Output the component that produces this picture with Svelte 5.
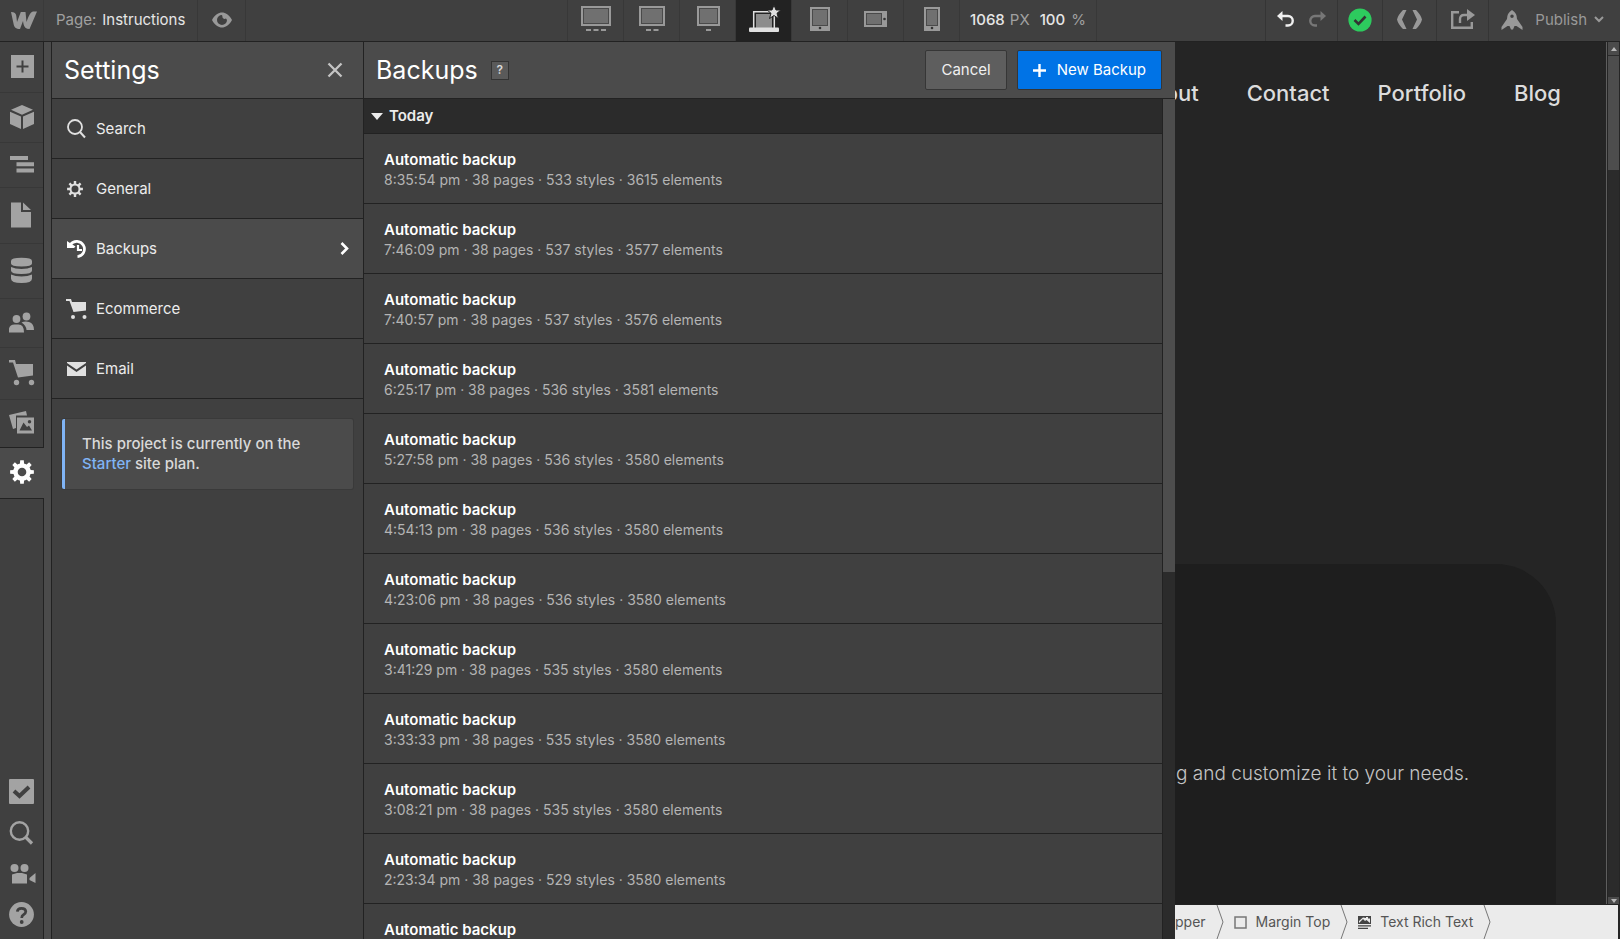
<script>
  const rail = [
    { id: 'add', label: 'Add elements', h: 23 },
    { id: 'cube', label: 'Symbols', h: 22 },
    { id: 'nav', label: 'Navigator', h: 17 },
    { id: 'page', label: 'Pages', h: 28 },
    { id: 'db', label: 'CMS', h: 27 },
    { id: 'users', label: 'Users', h: 21 },
    { id: 'cart', label: 'Ecommerce', h: 24 },
    { id: 'assets', label: 'Assets', h: 20 }
  ];

  const menu = [
    { id: 'search', label: 'Search' },
    { id: 'general', label: 'General' },
    { id: 'backups', label: 'Backups' },
    { id: 'ecommerce', label: 'Ecommerce' },
    { id: 'email', label: 'Email' }
  ];
  let active = $state('backups');
  let open = $state(true);

  const backups = [
    ['8:35:54 pm', 533, 3615],
    ['7:46:09 pm', 537, 3577],
    ['7:40:57 pm', 537, 3576],
    ['6:25:17 pm', 536, 3581],
    ['5:27:58 pm', 536, 3580],
    ['4:54:13 pm', 536, 3580],
    ['4:23:06 pm', 536, 3580],
    ['3:41:29 pm', 535, 3580],
    ['3:33:33 pm', 535, 3580],
    ['3:08:21 pm', 535, 3580],
    ['2:23:34 pm', 529, 3580],
    ['', 0, 0]
  ];

  const gear = (cx, cy, ri, ro, n) => {
    let d = '';
    for (let i = 0; i < n; i++) {
      const a = (i * 2 * Math.PI) / n - Math.PI / 2;
      const pts = [[ri, -0.25], [ro, -0.15], [ro, 0.15], [ri, 0.25]];
      for (const [r, o] of pts) {
        d += (d ? 'L' : 'M') + (cx + r * Math.cos(a + o)).toFixed(2) + ' ' + (cy + r * Math.sin(a + o)).toFixed(2);
      }
    }
    return d + 'Z';
  };
</script>

<div class="app">
  <header class="topbar">
    <button class="logo" aria-label="Menu">
      <svg width="26" height="18" viewBox="0 0 26 18"><path fill="currentColor" d="M0 1C3.500 1 5 2.500 5.300 5L6 11L9.800 1H14.500L15.500 11C17 7 19 1 22 .5H26L18.500 18C15 18 13 16 12.500 13L12 10L9 18C5 18 3 16 2.600 13Z" /></svg>
    </button>
    <div class="bar">
      <div class="left">
        <button class="pagename"><span class="dim">Page:</span> Instructions</button>
        <button class="eye" aria-label="Preview">
          <svg width="20" height="16" viewBox="0 0 20 16"><path fill="currentColor" fill-rule="evenodd" d="M0 8C3 2.500 6.500 .5 10 .5S17 2.500 20 8C17 13.500 13.500 15.500 10 15.500S3 13.500 0 8ZM10 3A5 5 0 1 0 15 8L14 6.500A2.500 2.500 0 0 1 10.500 5.500Q10.500 4 10 3Z" /></svg>
        </button>
      </div>
      <nav class="devices" aria-label="Breakpoints">
        <button aria-label="1920px">
          <svg width="30" height="26" viewBox="0 0 30 26"><rect x="1" y="1" width="28" height="18" fill="#4a4a4a" stroke="#999" stroke-width="2" /><rect x="3" y="3" width="24" height="14" fill="#707070" /><path fill="#999" d="M5 23h5v2H5zM12.500 23h5v2h-5zM20 23h5v2h-5z" /></svg>
        </button>
        <button aria-label="1440px">
          <svg width="26" height="26" viewBox="0 0 26 26"><rect x="1" y="1" width="24" height="18" fill="#4a4a4a" stroke="#999" stroke-width="2" /><rect x="3" y="3" width="20" height="14" fill="#707070" /><path fill="#999" d="M7 23h5v2H7zM14.500 23h5v2h-5z" /></svg>
        </button>
        <button aria-label="1280px">
          <svg width="24" height="26" viewBox="0 0 24 26"><rect x="2" y="1" width="21" height="18" fill="#4a4a4a" stroke="#999" stroke-width="2" /><rect x="4" y="3" width="17" height="14" fill="#707070" /><path fill="#999" d="M10 23h5v2h-5z" /></svg>
        </button>
        <button class="on" aria-label="Base">
          <svg width="30" height="28" viewBox="0 0 30 28"><path fill="#222" stroke="#e0e0e0" stroke-width="1.500" d="M4.700 23V6.700H25.300V23" /><rect x="7" y="9" width="16" height="14" fill="#8c8c8c" /><rect x="0" y="22.500" width="30" height="4.500" rx="1" fill="#e0e0e0" /><path fill="#e0e0e0" stroke="#222" stroke-width="1" d="M25 0L27 5H31.800L28 8.300L29.500 13.500L25 10.500L20.500 13.500L22 8.300L18.200 5H23Z" /></svg>
        </button>
        <button aria-label="Tablet">
          <svg width="20" height="24" viewBox="0 0 20 24"><rect width="20" height="24" fill="#999" /><rect x="2" y="2" width="16" height="17" fill="#4a4a4a" /><rect x="3" y="3" width="14" height="15" fill="#707070" /><circle cx="10" cy="21" r="1.300" fill="#333" /></svg>
        </button>
        <button aria-label="Mobile landscape">
          <svg width="23" height="24" viewBox="0 0 23 24"><rect y="4" width="23" height="16" fill="#999" /><rect x="2" y="6" width="16" height="12" fill="#4a4a4a" /><rect x="3" y="7" width="14" height="10" fill="#707070" /><circle cx="20.500" cy="12" r="1.300" fill="#333" /></svg>
        </button>
        <button aria-label="Mobile portrait">
          <svg width="16" height="24" viewBox="0 0 16 24"><rect width="16" height="24" fill="#999" /><rect x="2" y="2" width="12" height="17" fill="#4a4a4a" /><rect x="3" y="3" width="10" height="15" fill="#707070" /><circle cx="8" cy="21" r="1.300" fill="#333" /></svg>
        </button>
        <button class="size">1068 <span class="dim">PX</span><span class="zoom">100 <span class="dim">%</span></span></button>
      </nav>
      <div class="tools">
        <div class="undo">
          <button class="bright" aria-label="Undo">
            <svg width="17" height="17" viewBox="0 0 17 17"><path fill="none" stroke="currentColor" stroke-width="2.400" d="M4 5H11A4.500 4.500 0 0 1 11 14.500H8.500" /><path fill="currentColor" d="M0 5L5.500 0V10Z" /></svg>
          </button>
          <button class="faint" aria-label="Redo">
            <svg width="17" height="17" viewBox="0 0 17 17"><path fill="none" stroke="currentColor" stroke-width="2.400" d="M13 5H6A4.500 4.500 0 0 0 6 14.500H8" /><path fill="currentColor" d="M17 5L11.500 0V10Z" /></svg>
          </button>
        </div>
        <button class="t45" aria-label="Saved">
          <svg width="24" height="24" viewBox="0 0 24 24"><circle cx="12" cy="12" r="11.600" fill="#2dcb5e" /><path fill="none" stroke="#333" stroke-width="2.600" d="M6.500 12L10.500 16L17.500 8.500" /></svg>
        </button>
        <button class="t54" aria-label="Code export">
          <svg width="25" height="19" viewBox="0 0 25 19"><path fill="currentColor" d="M6 0H9.500L5 9.500L9.500 19H6Q1 14 0 9.500Q1 5 6 0ZM19 0H15.500L20 9.500L15.500 19H19Q24 14 25 9.500Q24 5 19 0Z" /></svg>
        </button>
        <button class="t52" aria-label="Share">
          <svg width="24" height="21" viewBox="0 0 24 21"><path fill="none" stroke="currentColor" stroke-width="2.400" d="M8 3.200H1.200V18.800H20.800V13M9 14V10Q9 6 13 6H17" /><path fill="currentColor" d="M16 0L24 6L16 12Z" /></svg>
        </button>
        <button class="publish">
          <svg width="22" height="20" viewBox="0 0 22 20"><path fill="currentColor" fill-rule="evenodd" d="M11 0Q16 3 16 9L21.500 17V20L15.500 16H13.500L12 19.500H10L8.500 16H6.500L.5 20V17L6 9Q6 3 11 0ZM11 4.500A1.700 1.700 0 1 0 11 8A1.700 1.700 0 0 0 11 4.500Z" /></svg>
          <span>Publish</span>
          <svg class="chev" width="10" height="7" viewBox="0 0 10 7"><path fill="none" stroke="currentColor" stroke-width="2" d="M1 1L5 5L9 1" /></svg>
        </button>
      </div>
    </div>
  </header>

  <div class="body">
    <aside class="rail">
      {#each rail as r}
        <button class="ritem" aria-label={r.label}>
          <svg width="28" height={r.h} viewBox="0 {(24 - r.h) / 2} 28 {r.h}" fill="currentColor">
            {#if r.id === 'add'}
              <path fill-rule="evenodd" d="M3 .5H26V23.500H3ZM13.500 6V11H8.500V13H13.500V18H15.500V13H20.500V11H15.500V6Z" />
            {:else if r.id === 'cube'}
              <path d="M14 0L25 4.800L14 9.800L3 4.800ZM2 6.800L13 11.500V24L2 19ZM26 6.800L15 11.500V24L26 19Z" />
            {:else if r.id === 'nav'}
              <path d="M2 3.500H20V7.500H2ZM8.500 9.700H26V13.700H8.500ZM8.500 16H26V20H8.500Z" />
            {:else if r.id === 'page'}
              <path d="M3-.5H13V9H23V24.500H3ZM15-.5L23 7H15Z" />
            {:else if r.id === 'db'}
              <path d="M3 2.500Q3-.8 13.500-.8T24 2.500V5Q24 8 13.500 8T3 5ZM3 8.500Q7 10.500 13.500 10.500T24 8.500V12Q24 15.500 13.500 15.500T3 12ZM3 16Q7 18 13.500 18T24 16V20Q24 24.500 13.500 24.500T3 20Z" />
            {:else if r.id === 'users'}
              <circle cx="8.500" cy="8.500" r="3.900" /><circle cx="18.500" cy="6" r="3.900" /><path d="M1 22V18Q2 14 6.500 14H10.500Q16 14 16 22ZM13.500 12Q17 10.500 21 11.500Q26 13 26 19.500H18.500Q18 14.500 13.500 12Z" />
            {:else if r.id === 'cart'}
              <path d="M1-1H7L8 3H25V14.500L10 16.500L5 1.500H1Z" /><circle cx="8.500" cy="21.500" r="2.700" /><circle cx="23.500" cy="21.500" r="2.700" />
            {:else if r.id === 'assets'}
              <path d="M1 4L18 0L19 4.500H8V17L5 18Z" /><path fill-rule="evenodd" d="M9 6.500H26V22.500H9ZM11.500 19.500H24L21 14.500L19 16L15.500 11.500ZM21.500 9A1.700 1.700 0 1 0 21.500 12.500A1.700 1.700 0 0 0 21.500 9Z" />
            {/if}
          </svg>
        </button>
      {/each}
      <button class="ritem on" aria-label="Settings">
        <svg width="28" height="22" viewBox="0 1 28 22"><path fill="currentColor" d={gear(14, 12, 8.5, 12, 8)} /><circle cx="14" cy="12" r="6.500" fill="none" stroke="currentColor" stroke-width="4.500" /><circle cx="14" cy="12" r="4.300" fill="#4b4b4b" /></svg>
      </button>
      <div class="railrest">
        <button aria-label="Audit"><svg width="27" height="25" viewBox="0 0 27 25"><rect width="25" height="25" x="1" rx="1" fill="currentColor" /><path d="M6 12L11.500 17L21 8" fill="none" stroke="#404040" stroke-width="4" /></svg></button>
        <button aria-label="Find"><svg width="27" height="25" viewBox="0 0 27 25"><circle cx="11.500" cy="11" r="8.700" fill="none" stroke="currentColor" stroke-width="2.400" /><path d="M17.500 17L24 23.500" stroke="currentColor" stroke-width="3.200" /></svg></button>
        <button aria-label="Video tutorials"><svg width="27" height="25" viewBox="0 0 27 25" fill="currentColor"><circle cx="6.500" cy="7" r="4" /><circle cx="16.500" cy="7" r="4" /><path d="M4 13.500L9 12H14L19 13.500V22.500H4ZM21.500 17L27.500 12V22L21.500 19Z" /></svg></button>
        <button aria-label="Help"><svg width="27" height="25" viewBox="0 0 27 25"><circle cx="13.500" cy="12.500" r="12.400" fill="currentColor" /><path d="M9.300 9.700Q9.500 6.300 13.500 6.300T17.800 9.500Q17.800 11.500 15.500 12.700Q13.700 13.700 13.700 16" fill="none" stroke="#404040" stroke-width="2.700" /><circle cx="13.700" cy="20" r="1.900" fill="#404040" /></svg></button>
      </div>
    </aside>

    <section class="settings">
      <div class="head">
        <h1>Settings</h1>
        <button class="close" aria-label="Close"><svg width="16" height="16" viewBox="0 0 16 16"><path d="M1.500 1.500L14.500 14.500M14.500 1.500L1.500 14.500" stroke="currentColor" stroke-width="2.300" /></svg></button>
      </div>
      {#each menu as m}
        <button class="mitem" class:on={active === m.id} onclick={() => (active = m.id)}>
          <svg width="20" height="20" viewBox="0 0 20 20">
            {#if m.id === 'search'}
              <circle cx="8" cy="8" r="7" fill="none" stroke="currentColor" stroke-width="1.800" /><path d="M13 13L18 18.500" stroke="currentColor" stroke-width="2" />
            {:else if m.id === 'general'}
              <path fill="currentColor" d={gear(8, 10, 5, 8, 8)} /><circle cx="8" cy="10" r="4.500" fill="#404040" stroke="currentColor" stroke-width="2" />
            {:else if m.id === 'backups'}
              <path d="M3.500 5.500A7.700 7.700 0 1 1 10.500 17.700" fill="none" stroke="currentColor" stroke-width="2.700" /><path fill="currentColor" d="M0 2L1.800 3.300L8.500 7.500L7 9H0Z" /><path d="M11 6V11H15" fill="none" stroke="currentColor" stroke-width="2.200" />
            {:else if m.id === 'ecommerce'}
              <path fill="currentColor" d="M-1 0H4L5 3H19V11.500L6.500 13L2.500 2H-1Z" /><circle cx="6" cy="18" r="2" fill="currentColor" /><circle cx="17.500" cy="18" r="2" fill="currentColor" />
            {:else}
              <path fill="currentColor" d="M0 3H19V4L9.500 10.500L0 4ZM0 6.500L9.500 13L19 6.500V17H0Z" />
            {/if}
          </svg>
          <span>{m.label}</span>
          {#if active === m.id}
            <svg class="arrow" width="9" height="13" viewBox="0 0 9 13"><path d="M1.500 1L7 6.500L1.500 12" fill="none" stroke="currentColor" stroke-width="2.600" /></svg>
          {/if}
        </button>
      {/each}
      <p class="callout">This project is currently on the <a href="#plan">Starter</a> site plan.</p>
    </section>

    <section class="backups">
      <div class="head">
        <h1>Backups</h1>
        <button class="q" aria-label="About backups">?</button>
        <div class="actions">
          <button class="btn">Cancel</button>
          <button class="btn primary"><svg width="13" height="13" viewBox="0 0 13 13"><path d="M6.500 0V13M0 6.500H13" stroke="currentColor" stroke-width="2.400" /></svg>New Backup</button>
        </div>
      </div>
      <div class="scroll">
        <div class="list">
          <button class="today" onclick={() => (open = !open)}>
            <svg width="12" height="7" viewBox="0 0 12 7"><path d="M0 0H12L6 7Z" fill="currentColor" /></svg>Today
          </button>
          {#if open}
            {#each backups as [time, styles, elements]}
              <article>
                <h2>Automatic backup</h2>
                {#if time}<p>{time} · 38 pages · {styles} styles · {elements} elements</p>{/if}
              </article>
            {/each}
          {/if}
        </div>
        <div class="track"><div class="thumb"></div></div>
      </div>
    </section>

    <main class="stage">
      <div class="view">
        <div class="site">
          <nav>
            <a href="#about">About</a><a href="#contact">Contact</a><a href="#portfolio">Portfolio</a><a href="#blog">Blog</a>
          </nav>
          <div class="card"><p>g and customize it to your needs.</p></div>
        </div>
        <div class="vbar">
          <span class="cap"><svg width="6" height="4" viewBox="0 0 6 4"><path d="M0 4L3 0L6 4Z" fill="#b8b8b8" /></svg></span>
          <span class="vthumb"></span>
          <span class="cap low"><svg width="6" height="4" viewBox="0 0 6 4"><path d="M0 0H6L3 4Z" fill="#b8b8b8" /></svg></span>
        </div>
      </div>
      <footer class="crumbs">
        <button>pper</button>
        <svg class="sep" width="8" height="34" viewBox="0 0 8 34"><path d="M1 0L7 17L1 34" fill="none" stroke="#777" /></svg>
        <button><svg width="13" height="13" viewBox="0 0 13 13"><rect x="1" y="1" width="11" height="11" fill="none" stroke="#777" stroke-width="1.500" /></svg>Margin Top</button>
        <svg class="sep" width="8" height="34" viewBox="0 0 8 34"><path d="M1 0L7 17L1 34" fill="none" stroke="#777" /></svg>
        <button><svg width="13" height="13" viewBox="0 0 13 13"><path fill="#444" fill-rule="evenodd" d="M0 0H13V8H0ZM1 7L5 3L7 5L8.500 4L12 7V2.500H10V1H8V2L5 1.500L1 5ZM0 9.200H13V10.400H0ZM0 11.800H10V13H0Z" /></svg>Text Rich Text</button>
        <svg class="sep" width="8" height="34" viewBox="0 0 8 34"><path d="M1 0L7 17L1 34" fill="none" stroke="#777" /></svg>
      </footer>
    </main>
  </div>
</div>

<style>
  :global(body) { margin: 0; background: #404040; }
  .app {
    height: 100vh;
    display: flex;
    flex-direction: column;
    overflow: hidden;
    font-family: Inter, "Liberation Sans", sans-serif;
    font-size: 15px;
    line-height: 20px;
    color: #e6e6e6;
  }
  button { font: inherit; color: inherit; background: none; border: 0; padding: 0; margin: 0; cursor: pointer; }
  svg { display: block; flex: none; overflow: visible; }
  h1, h2, p { margin: 0; }
  .dim { color: #a0a0a0; }

  .topbar { display: flex; height: 41px; flex: none; border-bottom: 1px solid #222; background: #404040; }
  .topbar button { display: flex; align-items: center; justify-content: center; color: #999; padding-bottom: 2px; }
  .topbar .logo { width: 44px; padding-left: 4px; border-right: 1px solid #3a3a3a; }
  .bar { flex: 1; display: grid; grid-template-columns: 1fr auto 1fr; }
  .left { display: flex; }
  .topbar .pagename { color: #e6e6e6; padding: 0 12px 2px; gap: 6px; border-right: 1px solid #383838; }
  .topbar .eye { width: 48px; border-right: 1px solid #383838; }
  .devices { display: flex; border-left: 1px solid #383838; }
  .devices button { width: 56px; box-sizing: border-box; border-right: 1px solid #383838; }
  .topbar .devices button:not(.size) { padding-bottom: 4px; }
  .devices .on { background: #222; }
  .topbar .size { width: auto; color: #e6e6e6; font-weight: 500; gap: 5px; padding: 0 10px 2px; }
  .size .dim { font-weight: 400; }
  .zoom { display: flex; gap: 6px; padding-left: 5px; }
  .tools { display: flex; justify-content: flex-end; }
  .tools > * { border-left: 1px solid #353535; box-sizing: border-box; }
  .undo { display: flex; width: 72px; justify-content: center; gap: 15px; }
  .topbar .bright { color: #f0f0f0; }
  .topbar .faint { color: #777; }
  .t45 { width: 45px; }
  .t54 { width: 54px; }
  .t52 { width: 52px; }
  .topbar .publish { gap: 12px; padding: 0 16px 2px 12px; }
  .chev { margin-left: -5px; }

  .body {
    flex: 1;
    min-height: 0;
    display: grid;
    grid-template-columns: 44px 320px minmax(0, 811fr) minmax(0, 445fr);
  }
  .rail { display: flex; flex-direction: column; color: #a3a3a3; background: #404040; }
  .ritem { box-sizing: content-box; padding: 13px 0 15px 8px; display: flex; border-right: 1px solid #222; box-shadow: inset 0 -1px #383838; }
  .rail .on { color: #fff; background: #4b4b4b; border-right-color: #4b4b4b; box-shadow: 0 -1px #222, 0 1px #222; z-index: 1; }
  .railrest { flex: 1; display: flex; flex-direction: column; justify-content: flex-end; gap: 16px; padding: 0 0 12px 8px; border-right: 1px solid #222; }
  .railrest button { align-self: flex-start; }

  .settings { border-left: 7px solid #4b4b4b; box-shadow: inset 1px 0 #222; padding-left: 1px; border-right: 1px solid #222; background: #404040; }
  .head { box-sizing: border-box; height: 57px; display: flex; align-items: center; background: #4b4b4b; border-bottom: 1px solid #222; padding: 0 13px 0 12px; }
  h1 { font-size: 25px; line-height: 32px; font-weight: 400; color: #fff; }
  .close { margin-left: auto; margin-right: 7px; color: #c4c4c4; }
  .mitem { width: 100%; height: 60px; box-sizing: border-box; display: flex; align-items: center; gap: 9px; padding: 0 14px 0 15px; border-bottom: 1px solid #222; color: #e0e0e0; }
  .mitem.on { background: #4b4b4b; color: #fff; }
  .mitem span { color: #ececec; }
  .arrow { margin-left: auto; }
  .callout { margin: 20px 10px; padding: 15px 40px 15px 17px; background: #4b4b4b; border-left: 3px solid #80b4f5; border-radius: 2px; box-shadow: 0 0 0 1px #3a3a3a; font-weight: 500; color: #d9d9d9; }
  .callout a { color: #80b4f5; text-decoration: none; }

  .backups { display: flex; flex-direction: column; min-height: 0; background: #404040; }
  .q { width: 18px; height: 19px; margin-left: 13px; border: 1px solid #333; background: #5a5a5a; font-size: 12px; line-height: 16px; font-weight: 600; box-sizing: border-box; color: #d9d9d9; }
  .actions { display: flex; gap: 10px; margin-left: auto; }
  .btn { height: 40px; padding: 0 15px; border: 1px solid #363636; border-radius: 2px; background: #5e5e5e; color: #f0f0f0; display: flex; align-items: center; gap: 11px; white-space: nowrap; }
  .btn.primary { background: #0073e6; color: #fff; }
  .scroll { flex: 1; min-height: 0; display: flex; }
  .list { flex: 1; min-width: 0; overflow: hidden; border-right: 1px solid #222; }
  .today { width: 100%; height: 35px; display: flex; align-items: center; gap: 6px; padding: 0 7px; background: #2b2b2b; border-bottom: 1px solid #222; font-weight: 600; color: #ececec; }
  article { padding: 16px 20px 13px; border-bottom: 1px solid #222; }
  h2 { font-size: 15px; line-height: 20px; font-weight: 600; color: #fff; }
  article p { font-size: 14px; color: #b4b4b4; }
  .track { width: 12px; display: grid; grid-template-rows: 9fr 7fr; background: #2b2b2b; }
  .thumb { background: #4d4d4d; }

  .stage { display: flex; flex-direction: column; min-width: 0; min-height: 0; background: #252525; }
  .view { flex: 1; min-height: 0; display: flex; }
  .site { flex: 1; min-width: 0; display: flex; flex-direction: column; overflow: hidden; border-right: 1px solid #5e5e5e; }
  .site nav { display: flex; justify-content: flex-end; gap: 48px; padding: 36px 45px 0 0; font-size: 22px; line-height: 30px; font-weight: 500; }
  .site a { color: #dcdcdc; text-decoration: none; }
  .card { flex: 1; margin: 456px 50px 0 0; background: #1e1e1e; border-top-right-radius: 60px; }
  .card p { padding: 196px 0 0 1px; font-size: 19px; line-height: 28px; font-weight: 300; color: #c4c4c4; white-space: nowrap; }
  .vbar { width: 11px; margin: 0 1px; display: flex; flex-direction: column; background: #2b2b2b; }
  .cap { height: 13px; display: flex; align-items: center; justify-content: center; background: #4b4b4b; }
  .low { height: 7px; margin-top: auto; }
  .vthumb { height: 114px; margin-top: 1px; background: #4d4d4d; }
  .crumbs { height: 34px; flex: none; margin-right: 2px; display: flex; background: #ebebeb; border-top: 1px solid #222; overflow: hidden; font-size: 14px; }
  .crumbs button { display: flex; align-items: center; gap: 9px; color: #555; padding: 0 10px; white-space: nowrap; }
  .crumbs button:first-child { padding: 0 10px 0 0; }
</style>
